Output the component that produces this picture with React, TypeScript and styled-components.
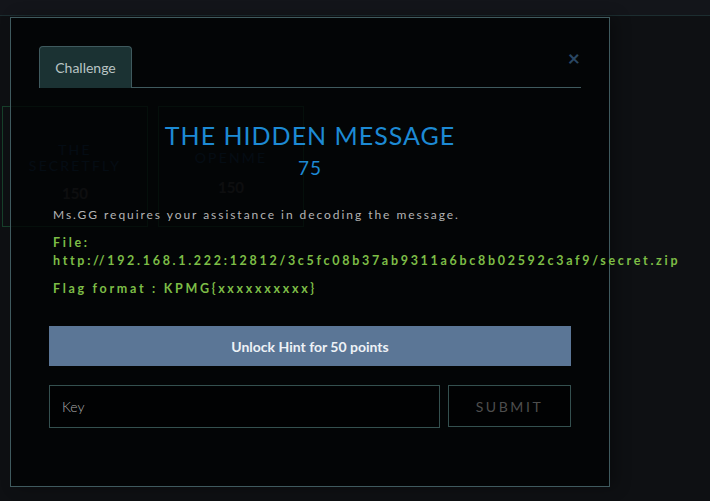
import React from "react";
import styled, { createGlobalStyle } from "styled-components";

const Global = createGlobalStyle`
  html, body { margin: 0; padding: 0; background: #0e1013; }
  body { font-family: Lato, "Open Sans", "Liberation Sans", sans-serif; }
  * { box-sizing: border-box; }
`;

const Page = styled.div`
  position: relative;
  width: 710px;
  height: 501px;
  overflow: hidden;
  background: #0e1013;
`;

const TopBar = styled.div`
  height: 16px;
  background: #13151a;
  border-bottom: 1px solid #1c2d30;
`;

const CardGrid = styled.div`
  display: flex;
  gap: 10px;
  padding: 90px 0 0 2px;
`;

const Card = styled.div<{ $top: number }>`
  width: 146px;
  height: 121px;
  border: 1px solid #17402b;
  display: flex;
  flex-direction: column;
  align-items: center;
  padding-top: ${(p) => p.$top}px;
  gap: ${(p) => (p.$top > 36 ? 12 : 10)}px;
`;

const CardTitle = styled.div`
  color: #123352;
  font-size: 14px;
  letter-spacing: 2.2px;
  line-height: 16px;
  text-align: center;
  text-transform: uppercase;
`;

const CardPoints = styled.div`
  color: #3e3e3e;
  font-size: 15px;
  font-weight: 700;
`;

const Modal = styled.div`
  position: absolute;
  left: 10px;
  top: 17px;
  width: 600px;
  height: 470px;
  border: 1px solid #3f5a5e;
  background: rgba(1, 2, 4, 0.8);
  padding: 28px 28px 0 28px;
  box-shadow: 6px 0 14px rgba(0, 0, 0, 0.3);
`;

const TabRow = styled.div`
  position: relative;
  display: flex;
  border-bottom: 1px solid #3f5a5e;
  height: 42px;
`;

const Tab = styled.div`
  width: 93px;
  height: 42px;
  margin-bottom: -1px;
  background: #1b3233;
  border: 1px solid #3f5a5e;
  border-bottom: none;
  border-radius: 4px 4px 0 0;
  color: #b9c4c4;
  font-size: 14px;
  display: flex;
  align-items: center;
  justify-content: center;
`;

const Close = styled.div`
  position: absolute;
  right: 1px;
  top: 1px;
  color: #2a4763;
  font-size: 21px;
  font-weight: 700;
  line-height: 22px;
`;

const Body = styled.div`
  display: flex;
  flex-direction: column;
  padding: 0 10px;
`;

const Title = styled.h2`
  margin: 32px 0 0;
  text-align: center;
  color: #1d8ad4;
  font-size: 25px;
  font-weight: 400;
  letter-spacing: 1px;
  line-height: 30px;
`;

const Points = styled.div`
  text-align: center;
  color: #1d8ad4;
  font-size: 19px;
  letter-spacing: 1px;
  line-height: 22px;
  margin-top: 7px;
`;

const Description = styled.p`
  margin: 29px 0 0 4px;
  color: #b4b4b4;
  font-size: 12px;
  letter-spacing: 1.95px;
  line-height: 14px;
`;

const Info = styled.p<{ $mt: number }>`
  margin: ${(p) => p.$mt}px 0 0 4px;
  color: #7dbd46;
  font-size: 12.5px;
  font-weight: 700;
  letter-spacing: 2.7px;
  line-height: 18px;
  white-space: nowrap;
`;

const HintButton = styled.button`
  margin-top: 28px;
  height: 40px;
  width: 100%;
  border: none;
  background: #5b7696;
  color: #eef2f6;
  font-family: inherit;
  font-size: 14px;
  font-weight: 700;
`;

const Form = styled.div`
  display: flex;
  gap: 8px;
  margin-top: 19px;
  align-items: flex-start;
`;

const KeyInput = styled.input`
  width: 391px;
  height: 43px;
  border: 1px solid #34504f;
  background: #010203;
  color: #ccc;
  padding: 0 12px;
  font-family: inherit;
  font-size: 14px;
  font-weight: 300;
  outline: none;
  &::placeholder { color: #aaaaaa; }
`;

const Submit = styled.button`
  flex: 1;
  height: 42px;
  border: 1px solid #34504f;
  background: #010203;
  color: #4e4e4e;
  font-family: inherit;
  font-size: 14px;
  letter-spacing: 2.6px;
`;

export default function App() {
  return (
    <Page>
      <Global />
      <TopBar />
      <CardGrid>
        <Card $top={35}>
          <CardTitle>The<br />Secretfly</CardTitle>
          <CardPoints>150</CardPoints>
        </Card>
        <Card $top={43}>
          <CardTitle>Openme</CardTitle>
          <CardPoints>150</CardPoints>
        </Card>
      </CardGrid>
      <Modal>
        <TabRow>
          <Tab>Challenge</Tab>
          <Close>×</Close>
        </TabRow>
        <Body>
          <Title>THE HIDDEN MESSAGE</Title>
          <Points>75</Points>
          <Description>Ms.GG requires your assistance in decoding the message.</Description>
          <Info $mt={12}>
            File:
            <br />
            http://192.168.1.222:12812/3c5fc08b37ab9311a6bc8b02592c3af9/secret.zip
          </Info>
          <Info $mt={10}>Flag format : KPMG{"{xxxxxxxxxx}"}</Info>
          <HintButton>Unlock Hint for 50 points</HintButton>
          <Form>
            <KeyInput placeholder="Key" />
            <Submit>SUBMIT</Submit>
          </Form>
        </Body>
      </Modal>
    </Page>
  );
}
